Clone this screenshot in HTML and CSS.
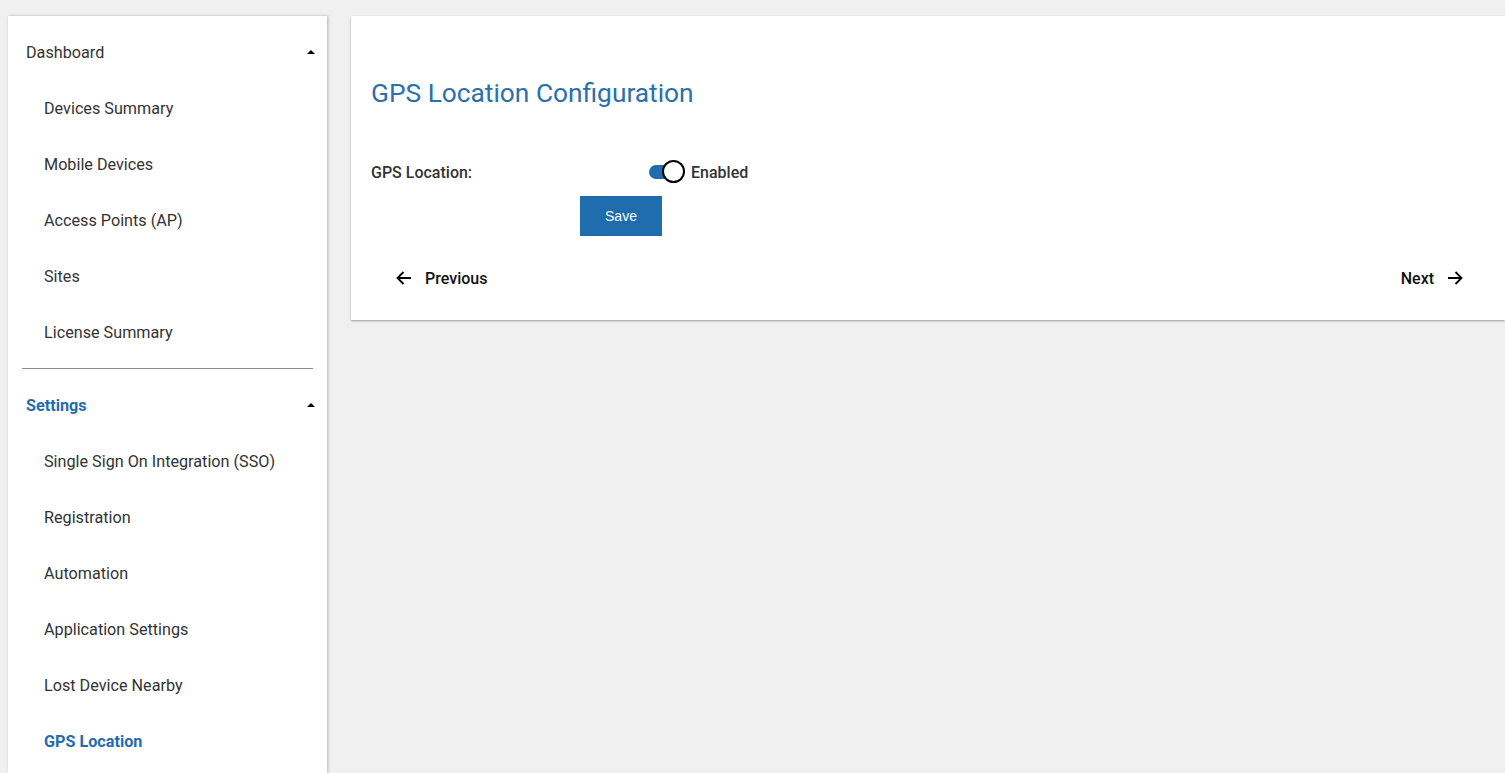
FILE: index.html
```html
<!DOCTYPE html>
<html>
<head>
<meta charset="utf-8">
<link rel="stylesheet" href="styles.css">
</head>
<body>
<div class="layout">
  <nav class="sidebar">
    <div class="group-head">
      <span>Dashboard</span><span class="caret"></span>
    </div>
    <div class="item">Devices Summary</div>
    <div class="item">Mobile Devices</div>
    <div class="item">Access Points (AP)</div>
    <div class="item">Sites</div>
    <div class="item">License Summary</div>
    <div class="divider"></div>
    <div class="group-head active">
      <span>Settings</span><span class="caret"></span>
    </div>
    <div class="item">Single Sign On Integration (SSO)</div>
    <div class="item">Registration</div>
    <div class="item">Automation</div>
    <div class="item">Application Settings</div>
    <div class="item">Lost Device Nearby</div>
    <div class="item active">GPS Location</div>
  </nav>
  <main class="card">
    <h1 class="title">GPS Location Configuration</h1>
    <div class="field">
      <span class="label">GPS Location:</span>
      <span class="toggle"><span class="track"></span><span class="knob"></span></span>
      <span class="state">Enabled</span>
    </div>
    <div class="actions">
      <button class="save">Save</button>
    </div>
    <div class="pager">
      <button class="nav">
        <svg width="18" height="18" viewBox="0 0 18 18"><path d="M16 9H2.5M8.5 3L2.5 9L8.5 15" fill="none" stroke="#000" stroke-width="1.8"/></svg>
        <span>Previous</span>
      </button>
      <button class="nav">
        <span>Next</span>
        <svg width="18" height="18" viewBox="0 0 18 18"><path d="M2 9H15.5M9.5 3L15.5 9L9.5 15" fill="none" stroke="#000" stroke-width="1.8"/></svg>
      </button>
    </div>
  </main>
</div>
</body>
</html>
```
FILE: styles.css
```css
html, body {
  margin: 0;
  padding: 0;
  background: #f0f0f0;
  overflow: hidden;
  height: 773px;
}
body {
  font-family: Roboto, "Liberation Sans", sans-serif;
  color: #333;
}
.layout {
  display: flex;
  align-items: flex-start;
  gap: 24px;
  padding: 16px 0 0 8px;
  height: 773px;
  box-sizing: border-box;
}
.sidebar {
  flex: 0 0 319px;
  background: #fff;
  padding-top: 8px;
  box-sizing: border-box;
  box-shadow: 1px 0 3px rgba(0,0,0,0.25);
  height: 757px;
  overflow: hidden;
}
.group-head {
  height: 56px;
  display: flex;
  align-items: center;
  justify-content: space-between;
  padding: 0 12px 0 18px;
  font-size: 16.2px;
  color: #333;
}
.group-head.active {
  color: #1f6daf;
  font-weight: 700;
}
.caret {
  width: 0;
  height: 0;
  border-left: 4px solid transparent;
  border-right: 4px solid transparent;
  border-bottom: 4px solid #000;
}
.item {
  height: 56px;
  display: flex;
  align-items: center;
  padding-left: 36px;
  font-size: 16.2px;
  color: #333;
}
.item.active {
  color: #1f6daf;
  font-weight: 700;
}
.divider {
  margin: 8px 14px;
  border-top: 1px solid #8e8e8e;
}
.card {
  flex: 1;
  background: #fff;
  padding: 0 0 0 20px;
  box-sizing: border-box;
  height: 304px;
  box-shadow: 0 1px 2px rgba(0,0,0,0.35);
}
.title {
  margin: 0;
  padding-top: 60px;
  font-size: 26.3px;
  line-height: 34px;
  font-weight: 400;
  color: #2a6fae;
}
.field {
  display: flex;
  align-items: center;
  margin-top: 50px;
  height: 24px;
  font-size: 16px;
}
.label {
  width: 278px;
  font-weight: 500;
  color: #333;
}
.toggle {
  position: relative;
  width: 36px;
  height: 24px;
  display: inline-block;
}
.track {
  position: absolute;
  left: 0;
  top: 5px;
  width: 30px;
  height: 14px;
  border-radius: 7px;
  background: #1f6daf;
}
.knob {
  position: absolute;
  left: 13px;
  top: 0;
  width: 19px;
  height: 19px;
  border-radius: 50%;
  background: #fff;
  border: 2px solid #000;
}
.state {
  margin-left: 6px;
  font-weight: 500;
  color: #333;
}
.actions {
  margin-top: 12px;
  padding-left: 209px;
}
.save {
  width: 82px;
  height: 40px;
  border: 0;
  background: #1f6daf;
  color: #fff;
  font-family: "Liberation Sans", Arial, sans-serif;
  font-size: 14px;
  padding: 0;
}
.pager {
  display: flex;
  justify-content: space-between;
  margin-top: 22px;
  padding-right: 41px;
}
.nav {
  display: flex;
  align-items: center;
  gap: 12px;
  background: none;
  border: 0;
  padding: 0;
  height: 40px;
  font-family: Roboto, "Liberation Sans", sans-serif;
  font-size: 16px;
  font-weight: 500;
  color: #111;
}
.nav:first-child {
  padding-left: 24px;
}
```
